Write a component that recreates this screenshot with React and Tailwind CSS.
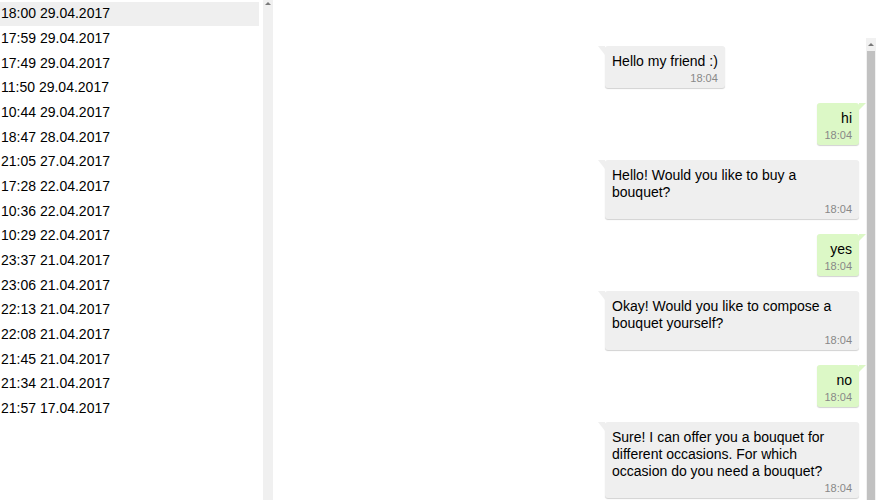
import React from "react";

const dates = [
  "18:00 29.04.2017",
  "17:59 29.04.2017",
  "17:49 29.04.2017",
  "11:50 29.04.2017",
  "10:44 29.04.2017",
  "18:47 28.04.2017",
  "21:05 27.04.2017",
  "17:28 22.04.2017",
  "10:36 22.04.2017",
  "10:29 22.04.2017",
  "23:37 21.04.2017",
  "23:06 21.04.2017",
  "22:13 21.04.2017",
  "22:08 21.04.2017",
  "21:45 21.04.2017",
  "21:34 21.04.2017",
  "21:57 17.04.2017",
];

const messages = [
  { me: false, text: "Hello my friend :)" },
  { me: true, text: "hi" },
  { me: false, text: "Hello! Would you like to buy a bouquet?" },
  { me: true, text: "yes" },
  { me: false, text: "Okay! Would you like to compose a bouquet yourself?" },
  { me: true, text: "no" },
  { me: false, text: "Sure! I can offer you a bouquet for different occasions. For which occasion do you need a bouquet?" },
];

function UpArrow() {
  return (
    <div className="flex justify-center">
      <div className="w-0 h-0 border-l-[3px] border-r-[3px] border-b-[3px] border-l-transparent border-r-transparent border-b-[#7a7a7a]" />
    </div>
  );
}

function Bubble({ me, text }) {
  return (
    <div className={`flex mb-[15px] ${me ? "justify-end" : "justify-start"}`}>
      <div
        className={`relative max-w-full rounded-[3px] px-[7px] pt-[7px] pb-[3px] shadow-[0_1px_1px_rgba(0,0,0,0.18)] ${
          me ? "bg-[#dcf8c6] text-right" : "bg-[#efefef] text-left"
        }`}
      >
        {me ? (
          <div className="absolute top-0 right-[-7px] w-[7px] h-[7px] bg-[#dcf8c6] [clip-path:polygon(0_0,100%_0,0_100%)]" />
        ) : (
          <div className="absolute top-0 left-[-7px] w-[7px] h-[9px] bg-[#efefef] [clip-path:polygon(0_0,100%_0,100%_100%)]" />
        )}
        <div className="text-[14px] leading-[17px] text-black">{text}</div>
        <div className="mt-[2px] text-[11px] leading-[13px] text-[#888888] text-right">18:04</div>
      </div>
    </div>
  );
}

export default function App() {
  return (
    <div
      className="w-[892px] h-[500px] overflow-hidden bg-white flex"
      style={{ fontFamily: '"Liberation Sans", Arial, sans-serif' }}
    >
      {/* Left panel */}
      <div className="w-[274px] h-full flex shrink-0">
        <div className="w-[259px] pt-[1.67px]">
          {dates.map((d, i) => (
            <div
              key={d + i}
              className={`h-[24.66px] flex items-center pl-[1px] text-[14px] text-black ${
                i === 0 ? "bg-[#efefef]" : ""
              }`}
            >
              {d}
            </div>
          ))}
        </div>
        <div className="w-[4px]" />
        <div className="w-[10px] h-full bg-[#f0f0f0] pt-[2px]">
          <UpArrow />
        </div>
        <div className="w-[1px]" />
      </div>

      {/* Right panel */}
      <div className="flex-1 h-full flex justify-end pr-[16px] pt-[38px]">
        <div className="w-[278px] flex h-[600px]">
          <div className="w-[268px] pl-[7px] pr-[7px] pt-[8px]">
            {messages.map((m, i) => (
              <Bubble key={i} me={m.me} text={m.text} />
            ))}
          </div>
          <div className="w-[10px] bg-[#f1f1f1] flex flex-col">
            <div className="h-[13px] pt-[5px]">
              <UpArrow />
            </div>
            <div className="flex-1 mx-[1px] bg-[#c1c1c1]" />
          </div>
        </div>
      </div>
    </div>
  );
}
